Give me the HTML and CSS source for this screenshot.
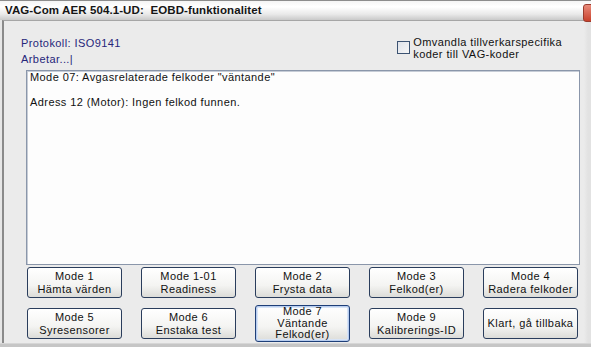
FILE: index.html
```html
<!DOCTYPE html>
<html>
<head>
<meta charset="utf-8">
<link rel="stylesheet" href="styles.css">
</head>
<body>
<div class="window">
  <div class="titlebar">VAG-Com AER 504.1-UD:&nbsp;&nbsp;EOBD-funktionalitet</div>
  <div class="close"></div>
  <div class="frame">
    <div class="header">
      <div class="status">
        <div>Protokoll: ISO9141</div>
        <div>Arbetar...|</div>
      </div>
      <label class="convert">
        <span class="checkbox"></span>
        <span class="convert-text">Omvandla tillverkarspecifika<br>koder till VAG-koder</span>
      </label>
    </div>
    <div class="output">Mode 07: Avgasrelaterade felkoder "väntande"<br><br>Adress 12 (Motor): Ingen felkod funnen.</div>
    <div class="buttons">
      <div class="btn">Mode 1<br>Hämta värden</div>
      <div class="btn">Mode 1-01<br>Readiness</div>
      <div class="btn">Mode 2<br>Frysta data</div>
      <div class="btn">Mode 3<br>Felkod(er)</div>
      <div class="btn">Mode 4<br>Radera felkoder</div>
    </div>
    <div class="buttons row2">
      <div class="btn">Mode 5<br>Syresensorer</div>
      <div class="btn">Mode 6<br>Enstaka test</div>
      <div class="btn btn-tall focused">Mode 7<br>Väntande<br>Felkod(er)</div>
      <div class="btn">Mode 9<br>Kalibrerings-ID</div>
      <div class="btn">Klart, gå tillbaka</div>
    </div>
  </div>
  <div class="bottom"></div>
</div>
</body>
</html>
```

FILE: styles.css
```css
html, body {
  margin: 0;
  padding: 0;
}
body {
  width: 591px;
  height: 347px;
  overflow: hidden;
  background: #e6e6e6;
  font-family: "Liberation Sans", Arial, sans-serif;
  font-size: 11px;
  letter-spacing: 0.42px;
  color: #111;
}
.window {
  position: relative;
  width: 591px;
  height: 347px;
  display: flex;
  flex-direction: column;
}
.titlebar {
  height: 19px;
  border-top: 1px solid #8c8c8c;
  background: linear-gradient(#f4f4f4 0%, #ffffff 30%, #e9e9e9 70%, #c9c9c9 100%);
  font-weight: bold;
  font-size: 11.5px;
  letter-spacing: 0.1px;
  line-height: 19px;
  padding-left: 5px;
  color: #151515;
}
.close {
  position: absolute;
  left: 583px;
  top: 4px;
  width: 12px;
  height: 16px;
  border-radius: 3px;
  background: linear-gradient(#e88a7a, #c8412c);
  border: 1px solid #9a3b2d;
}
.frame {
  flex: 1;
  margin-left: 2px;
  border-left: 2px solid #8a8a8a;
  border-top: 1px solid #a6a6a6;
  background: linear-gradient(to right, #ebebeb 0, #ebebeb 580px, #e2e2e2 584px);
  padding: 14px 0 0 22px;
  display: flex;
  flex-direction: column;
}
.header {
  display: flex;
  justify-content: space-between;
  height: 35px;
  width: 563px;
}
.status {
  color: #26267a;
  line-height: 16px;
  margin-left: -5px;
}
.convert {
  display: flex;
  align-items: flex-start;
  gap: 3px;
  padding-top: 2px;
  margin-right: 27px;
}
.checkbox {
  width: 11px;
  height: 11px;
  margin-top: 4px;
  border: 1px solid #3c5372;
  background: linear-gradient(135deg, #dfe3ea, #f6f6f6);
}
.convert-text {
  line-height: 11.5px;
  color: #111;
}
.output {
  width: 549px;
  height: 193px;
  background: #fdfdfd;
  border: 1px solid #8a96aa;
  box-shadow: inset 1px 1px 0 #c6ccd6;
  padding: 0 0 0 3px;
  line-height: 12.5px;
  color: #111;
}
.buttons {
  display: grid;
  grid-template-columns: repeat(5, 95px);
  column-gap: 19px;
  margin-top: 2px;
  margin-left: 1px;
}
.row2 {
  margin-top: 7px;
  align-items: center;
  height: 37px;
}
.btn {
  box-sizing: border-box;
  height: 31px;
  border: 1px solid #2a3d5c;
  border-radius: 3px;
  background: linear-gradient(#ffffff 0%, #f4f4f2 60%, #dcdcd8 100%);
  display: flex;
  align-items: center;
  justify-content: center;
  text-align: center;
  line-height: 12.5px;
  color: #111;
  white-space: nowrap;
}
.btn-tall {
  height: 37px;
  line-height: 11.5px;
}
.focused {
  border-color: #1f3f78;
  box-shadow: inset 0 0 0 1px #b8cdef, inset 0 0 0 2px #d8e4f6;
}
.bottom {
  height: 3px;
  background: #c6c6c6;
  border-top: 1px solid #d6d6d6;
}
```
